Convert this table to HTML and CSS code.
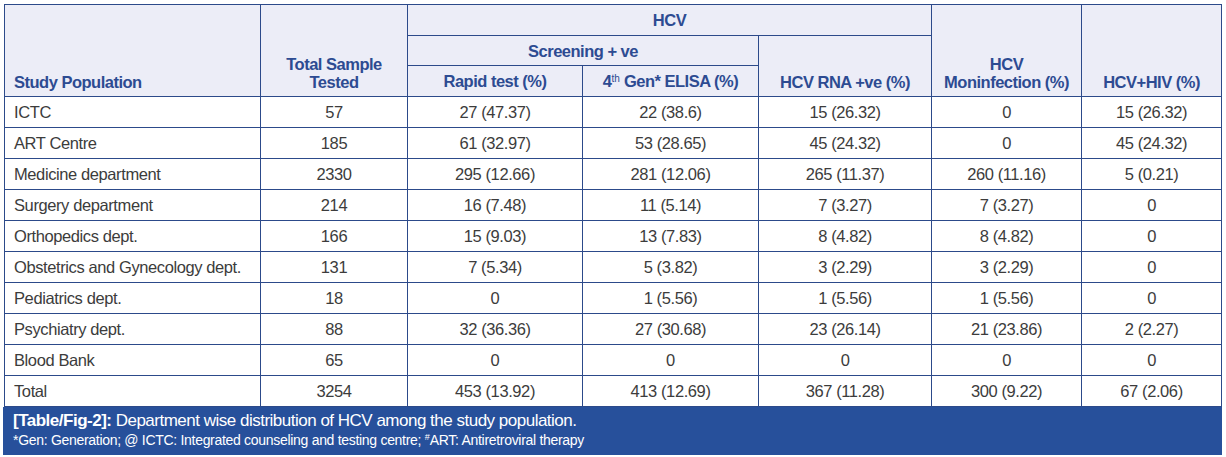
FILE: index.html
```html
<!DOCTYPE html>
<html>
<head>
<meta charset="utf-8">
<link rel="stylesheet" href="styles.css">
</head>
<body>
<div class="fig">
<table class="tbl">
<colgroup>
<col class="c1"><col class="c2"><col class="c3"><col class="c4"><col class="c5"><col class="c6"><col class="c7">
</colgroup>
<thead>
<tr class="h1">
<th rowspan="3" class="left">Study Population</th>
<th rowspan="3">Total Sample<br>Tested</th>
<th colspan="3" class="mid">HCV</th>
<th rowspan="3">HCV<br>Moninfection (%)</th>
<th rowspan="3">HCV+HIV (%)</th>
</tr>
<tr class="h2">
<th colspan="2" class="mid">Screening + ve</th>
<th rowspan="2">HCV RNA +ve (%)</th>
</tr>
<tr class="h3">
<th class="mid">Rapid test (%)</th>
<th class="mid">4<sup>th</sup> Gen* ELISA (%)</th>
</tr>
</thead>
<tbody>
<tr><td class="left">ICTC</td><td>57</td><td>27 (47.37)</td><td>22 (38.6)</td><td>15 (26.32)</td><td>0</td><td>15 (26.32)</td></tr>
<tr><td class="left">ART Centre</td><td>185</td><td>61 (32.97)</td><td>53 (28.65)</td><td>45 (24.32)</td><td>0</td><td>45 (24.32)</td></tr>
<tr><td class="left">Medicine department</td><td>2330</td><td>295 (12.66)</td><td>281 (12.06)</td><td>265 (11.37)</td><td>260 (11.16)</td><td>5 (0.21)</td></tr>
<tr><td class="left">Surgery department</td><td>214</td><td>16 (7.48)</td><td>11 (5.14)</td><td>7 (3.27)</td><td>7 (3.27)</td><td>0</td></tr>
<tr><td class="left">Orthopedics dept.</td><td>166</td><td>15 (9.03)</td><td>13 (7.83)</td><td>8 (4.82)</td><td>8 (4.82)</td><td>0</td></tr>
<tr><td class="left">Obstetrics and Gynecology dept.</td><td>131</td><td>7 (5.34)</td><td>5 (3.82)</td><td>3 (2.29)</td><td>3 (2.29)</td><td>0</td></tr>
<tr><td class="left">Pediatrics dept.</td><td>18</td><td>0</td><td>1 (5.56)</td><td>1 (5.56)</td><td>1 (5.56)</td><td>0</td></tr>
<tr><td class="left">Psychiatry dept.</td><td>88</td><td>32 (36.36)</td><td>27 (30.68)</td><td>23 (26.14)</td><td>21 (23.86)</td><td>2 (2.27)</td></tr>
<tr><td class="left">Blood Bank</td><td>65</td><td>0</td><td>0</td><td>0</td><td>0</td><td>0</td></tr>
<tr><td class="left">Total</td><td>3254</td><td>453 (13.92)</td><td>413 (12.69)</td><td>367 (11.28)</td><td>300 (9.22)</td><td>67 (2.06)</td></tr>
</tbody>
</table>
<div class="caption">
<p class="cap-main"><b>[Table/Fig-2]:</b> Department wise distribution of HCV among the study population.</p>
<p class="cap-note">*Gen: Generation; @ ICTC: Integrated counseling and testing centre; <sup>#</sup>ART: Antiretroviral therapy</p>
</div>
</div>
</body>
</html>
```

FILE: styles.css
```css
html, body {
  margin: 0;
  padding: 0;
  background: #ffffff;
}
body {
  font-family: "Liberation Sans", Arial, sans-serif;
}
.fig {
  padding: 4px 0 0 3px;
  width: 1219px;
}
.tbl {
  border-collapse: collapse;
  table-layout: fixed;
  width: 1217px;
  margin-left: 1px;
  font-size: 16.5px;
  letter-spacing: -0.4px;
  color: #3c3c3c;
}
.c1 { width: 256px; }
.c2 { width: 147px; }
.c3 { width: 175px; }
.c4 { width: 176px; }
.c5 { width: 173px; }
.c6 { width: 150px; }
.c7 { width: 140px; }
.tbl th, .tbl td {
  border: 1px solid #2c4a8a;
  padding: 0 6px;
  text-align: center;
}
.tbl th {
  background: #ecedf7;
  color: #2d4b92;
  font-weight: bold;
  letter-spacing: -0.5px;
  vertical-align: bottom;
  line-height: 18px;
  padding-bottom: 5px;
}
.tbl th.mid {
  vertical-align: middle;
  padding-bottom: 0;
}
.tbl th.left, .tbl td.left {
  text-align: left;
  padding-left: 9px;
}
.tbl thead tr.h1 { height: 31px; }
.tbl thead tr.h2 { height: 30px; }
.tbl thead tr.h3 { height: 31px; }
.tbl tbody tr { height: 31px; }
.tbl td {
  vertical-align: middle;
}
.tbl sup {
  font-size: 10px;
  line-height: 0;
  vertical-align: 5px;
  font-weight: normal;
  letter-spacing: 0;
}
.caption {
  background: #27509b;
  color: #ffffff;
  height: 48px;
  padding: 4px 0 0 10px;
  box-sizing: border-box;
}
.caption p {
  margin: 0;
}
.cap-main {
  font-size: 17px;
  letter-spacing: -0.5px;
  line-height: 20px;
}
.cap-note {
  font-size: 14px;
  letter-spacing: -0.3px;
  line-height: 19px;
}
.cap-note sup {
  font-size: 9px;
  line-height: 0;
  vertical-align: 5px;
  letter-spacing: 0;
}
```
